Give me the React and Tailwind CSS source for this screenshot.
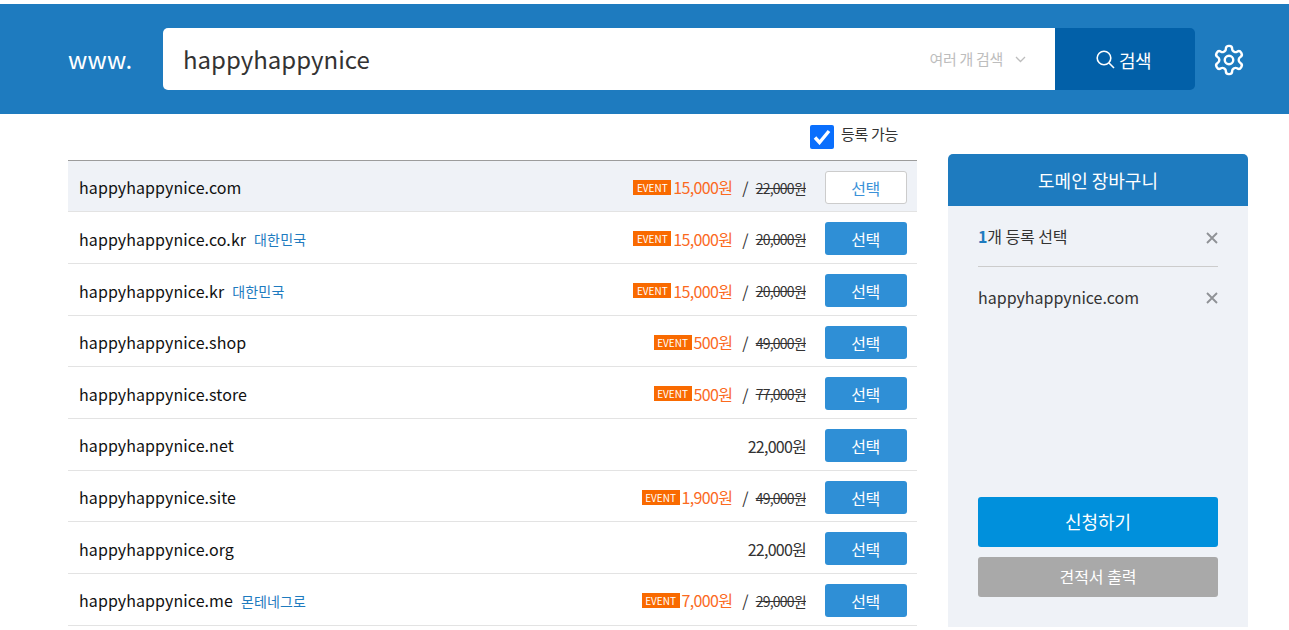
import React from 'react';

const font = { fontFamily: '"Noto Sans CJK KR", "Noto Sans", sans-serif' };

const rows = [
  { name: 'happyhappynice.com', event: '15,000원', price: '22,000원', selected: true },
  { name: 'happyhappynice.co.kr', country: '대한민국', event: '15,000원', price: '20,000원' },
  { name: 'happyhappynice.kr', country: '대한민국', event: '15,000원', price: '20,000원' },
  { name: 'happyhappynice.shop', event: '500원', price: '49,000원' },
  { name: 'happyhappynice.store', event: '500원', price: '77,000원' },
  { name: 'happyhappynice.net', price: '22,000원' },
  { name: 'happyhappynice.site', event: '1,900원', price: '49,000원' },
  { name: 'happyhappynice.org', price: '22,000원' },
  { name: 'happyhappynice.me', country: '몬테네그로', event: '7,000원', price: '29,000원' },
];

const CloseIcon = ({ className }) => (
  <svg className={className} width="12" height="12" viewBox="0 0 12 12" fill="none" stroke="#8f9296" strokeWidth="1.9">
    <path d="M1 1l10 10M11 1L1 11" />
  </svg>
);

const DomainRow = ({ row }) => (
  <div className={`flex h-[51.667px] items-center border-b border-[#e3e3e3] pl-[11px] pr-[10px] pt-[2.5px] ${row.selected ? 'bg-[#eff2f7]' : 'bg-white'}`}>
    <span className="text-[16px] tracking-[0.08px] text-[#111]">{row.name}</span>
    {row.country && <span className="ml-2 mt-[2px] text-[14px] tracking-[0.15px] text-[#1e7bbf]">{row.country}</span>}
    <div className="ml-auto flex items-center">
      {row.event && (
        <>
          <span className="flex h-[15px] w-[38px] items-center justify-center bg-[#f96a00] text-[10px] text-white">EVENT</span>
          <span className="ml-[2px] text-[16px] tracking-[-0.65px] text-[#fb6a1f]">{row.event}</span>
          <span className="ml-[10px] mr-[7px] text-[16px] text-[#333]">/</span>
        </>
      )}
      <span className={`tracking-[-0.75px] text-[#333] ${row.event ? 'mt-[2px] text-[14px] line-through' : 'mt-[1px] text-[16px]'}`}>{row.price}</span>
    </div>
    <button className={`ml-[19px] h-[33px] w-[82px] rounded-[3px] pr-[1px] pt-[1px] text-[16px] tracking-[-0.5px] ${row.selected ? 'border border-[#ccc] bg-white text-[#3a91d8]' : 'bg-[#2f8fd6] text-white'}`}>
      선택
    </button>
  </div>
);

export default function App() {
  return (
    <div className="h-[630px] overflow-hidden bg-white pt-[4px]" style={font}>
      {/* search bar */}
      <header className="flex h-[110px] items-center bg-[#1e7bbf] pl-[68px]">
        <span className="w-[95px] text-[24px] leading-none tracking-[0.3px] text-white">www.</span>
        <div className="flex h-[62px] w-[892px] items-center rounded-l-[5px] bg-white pl-[20px] pr-[29px]">
          <span className="text-[24px] text-[#333]">happyhappynice</span>
          <span className="ml-auto text-[15px] tracking-[-0.3px] text-[#bdbdbd]">여러 개 검색</span>
          <svg className="ml-[12px]" width="11" height="7" viewBox="0 0 11 7" fill="none" stroke="#bdbdbd" strokeWidth="1.3">
            <path d="M1 1l4.5 4.5L10 1" />
          </svg>
        </div>
        <button className="flex h-[62px] w-[140px] items-center justify-center gap-[4px] rounded-r-[5px] bg-[#0260a8] text-[18px] tracking-[-0.5px] text-white">
          <svg className="-ml-[4px]" width="20" height="20" viewBox="0 0 20 20" fill="none" stroke="white" strokeWidth="1.6">
            <circle cx="9" cy="9" r="6.8" />
            <path d="M14 14l5 5" />
          </svg>
          <span className="mt-[2px]">검색</span>
        </button>
        <svg className="ml-[17px] mt-[2px]" width="34" height="34" viewBox="0 0 24 24" fill="none" stroke="white" strokeWidth="1.7" strokeLinecap="round" strokeLinejoin="round">
          <path d="M12.22 2h-.44a2 2 0 0 0-2 2v.18a2 2 0 0 1-1 1.73l-.43.25a2 2 0 0 1-2 0l-.15-.08a2 2 0 0 0-2.73.73l-.22.38a2 2 0 0 0 .73 2.73l.15.1a2 2 0 0 1 1 1.72v.51a2 2 0 0 1-1 1.74l-.15.09a2 2 0 0 0-.73 2.73l.22.38a2 2 0 0 0 2.73.73l.15-.08a2 2 0 0 1 2 0l.43.25a2 2 0 0 1 1 1.73V20a2 2 0 0 0 2 2h.44a2 2 0 0 0 2-2v-.18a2 2 0 0 1 1-1.73l.43-.25a2 2 0 0 1 2 0l.15.08a2 2 0 0 0 2.73-.73l.22-.39a2 2 0 0 0-.73-2.73l-.15-.08a2 2 0 0 1-1-1.74v-.5a2 2 0 0 1 1-1.74l.15-.09a2 2 0 0 0 .73-2.73l-.22-.38a2 2 0 0 0-2.73-.73l-.15.08a2 2 0 0 1-2 0l-.43-.25a2 2 0 0 1-1-1.73V4a2 2 0 0 0-2-2z" />
          <circle cx="12" cy="12" r="3" />
        </svg>
      </header>

      <div className="flex pl-[68px]">
        {/* domain list */}
        <main className="w-[849px]">
          <div className="flex h-[45.63px] items-start justify-end pr-[19px] pt-[11px]">
            <span className="flex h-[24px] w-[24px] items-center justify-center rounded-[2px] bg-[#0a6ffd]">
              <svg width="18" height="16" viewBox="0 0 18 16" fill="none" stroke="white" strokeWidth="3.4">
                <path d="M2 8.5l4.5 5L16 2" />
              </svg>
            </span>
            <span className="ml-[7px] text-[15px] leading-[18px] tracking-[-0.3px] text-[#333]">등록 가능</span>
          </div>
          <div className="border-t border-[#9c9c9c]">
            {rows.map((row) => (
              <DomainRow key={row.name} row={row} />
            ))}
          </div>
        </main>

        {/* cart */}
        <aside className="ml-[31px] mt-[40px] flex h-[473px] w-[300px] flex-col">
          <div className="flex h-[52px] items-center justify-center rounded-t-[5px] bg-[#1e7bbf] text-[18px] text-white">도메인 장바구니</div>
          <div className="flex flex-1 flex-col bg-[#eff2f7] px-[30px]">
            <div className="flex h-[61px] items-center justify-between border-b border-[#cccccc]">
              <span className="text-[16px] tracking-[-0.1px] text-[#333]"><b className="font-bold text-[#1e7bbf]">1</b>개 등록 선택</span>
              <CloseIcon className="mt-[3px]" />
            </div>
            <div className="flex h-[62px] items-center justify-between">
              <span className="-mt-[2px] text-[16px] text-[#333]">happyhappynice.com</span>
              <CloseIcon />
            </div>
            <button className="mt-auto h-[50px] rounded-[3px] bg-[#0090dc] pb-[2px] text-[18px] text-white">신청하기</button>
            <button className="mb-[30px] mt-[10px] h-[40px] rounded-[3px] bg-[#a9a9a9] pb-[2px] text-[16px] text-white">견적서 출력</button>
          </div>
        </aside>
      </div>
    </div>
  );
}
